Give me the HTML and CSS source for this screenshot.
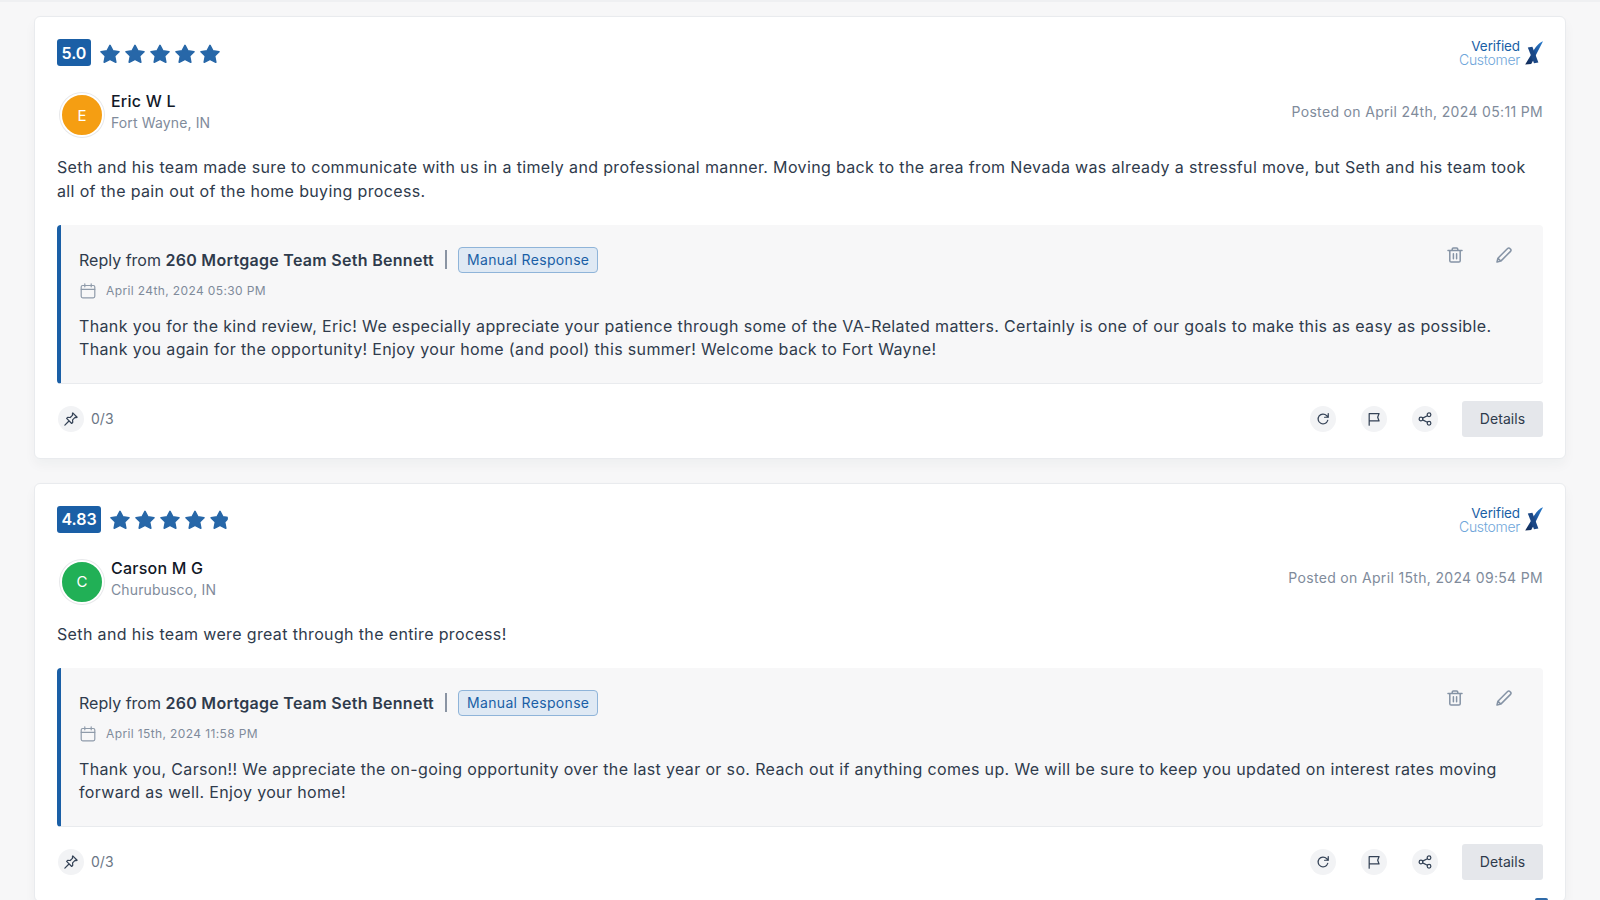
FILE: index.html
```html
<!DOCTYPE html>
<html lang="en">
<head>
<meta charset="utf-8">
<title>Reviews</title>
<link rel="stylesheet" href="styles.css">
</head>
<body>
<svg class="sprite" width="0" height="0" aria-hidden="true">
  <defs>
    <linearGradient id="xgrad" x1="1" y1="0" x2="0" y2="1">
      <stop offset="0" stop-color="#2a7fd0"/>
      <stop offset=".5" stop-color="#1a4f96"/>
      <stop offset="1" stop-color="#10264f"/>
    </linearGradient>
    <symbol id="star" viewBox="0 0 20 20"><path d="M10 1.4l2.9 5.5 6.1.8-4.4 4.3 1.2 6.2L10 15.4l-5.8 2.8 1.2-6.2L1 7.7l6.1-.8z"/></symbol>
    <symbol id="cal" viewBox="0 0 16 16"><rect x="1.2" y="2.5" width="13.6" height="12.3" rx="1.5"/><path d="M1.2 6.3h13.6M4.8 .8v3M11.2 .8v3"/></symbol>
    <symbol id="trash" viewBox="0 0 16 16"><path d="M1 3.5h14M5.2 3.5V2.2c0-.7.5-1.2 1.2-1.2h3.2c.7 0 1.2.5 1.2 1.2v1.3M2.8 3.5v10.2c0 .8.6 1.3 1.3 1.3h7.8c.7 0 1.3-.5 1.3-1.3V3.5M6.4 6.8v5M9.6 6.8v5"/></symbol>
    <symbol id="pen" viewBox="0 0 16 16"><path d="M1 15l.9-3.8L11.6 1.5c.7-.7 1.7-.7 2.3 0l.6.6c.6.6.6 1.6 0 2.3L4.8 14.1zM2 11.2l2.8 2.8"/></symbol>
    <symbol id="pin" viewBox="0 0 16 16"><path d="M10 1l5 5-1.2.5-1.2-.3-2.8 2.8.2 2.9-1.2 1.2-5.8-5.8 1.2-1.2 2.9.2 2.8-2.8-.3-1.2zM5.4 10.6L1 15"/></symbol>
    <symbol id="refresh" viewBox="0 0 16 16"><path d="M13.4 9.6A5.6 5.6 0 1 1 12.2 4.2L13.8 6M14 1.8V6H9.8"/></symbol>
    <symbol id="flag" viewBox="0 0 16 16"><path d="M2.5 15V1.8h11.3l-1.6 4.1 1.6 4.3H2.5"/></symbol>
    <symbol id="share" viewBox="0 0 16 16"><circle cx="3.4" cy="8" r="2.1"/><circle cx="12.6" cy="3.2" r="2.1"/><circle cx="12.6" cy="12.8" r="2.1"/><path d="M5.3 7l5.4-2.8M5.3 9l5.4 2.8"/></symbol>
    <symbol id="xmark" viewBox="0 0 18 24"><path fill="url(#xgrad)" d="M18 .2C13.6 1.6 10 7 7.4 11.5L.2 23.6l6-.6C9.6 17 14 8 18 .2z"/><path class="x-mid" d="M2.8 6.6l4.6-.8 6 15.6-4.4.8z"/></symbol>
  </defs>
</svg>
<main class="page">
  <article class="card">
    <div class="top-row">
      <div class="rating"><span class="score">5.0</span>
        <span class="stars">
          <svg class="star"><use href="#star"/></svg><svg class="star"><use href="#star"/></svg><svg class="star"><use href="#star"/></svg><svg class="star"><use href="#star"/></svg><svg class="star"><use href="#star"/></svg>
        </span>
      </div>
      <div class="verified"><div class="v-text"><span class="v-one">Verified</span><span class="v-two">Customer</span></div><svg class="v-x"><use href="#xmark"/></svg></div>
    </div>
    <div class="author-row">
      <div class="author"><span class="avatar orange">E</span><div class="who"><div class="name">Eric W L</div><div class="place">Fort Wayne, IN</div></div></div>
      <div class="posted">Posted on April 24th, 2024 05:11 PM</div>
    </div>
    <p class="review">Seth and his team made sure to communicate with us in a timely and professional manner. Moving back to the area from Nevada was already a stressful move, but Seth and his team took all of the pain out of the home buying process.</p>
    <section class="reply">
      <div class="reply-actions"><svg class="ic"><use href="#trash"/></svg><svg class="ic"><use href="#pen"/></svg></div>
      <div class="reply-head"><span>Reply from <b>260 Mortgage Team Seth Bennett</b></span><span class="bar"></span><span class="tag">Manual Response</span></div>
      <div class="reply-date"><svg class="cal"><use href="#cal"/></svg>April 24th, 2024 05:30 PM</div>
      <p class="reply-text">Thank you for the kind review, Eric! We especially appreciate your patience through some of the VA-Related matters. Certainly is one of our goals to make this as easy as possible. Thank you again for the opportunity! Enjoy your home (and pool) this summer! Welcome back to Fort Wayne!</p>
    </section>
    <div class="foot">
      <div class="pins"><span class="round"><svg class="ic-s"><use href="#pin"/></svg></span>0/3</div>
      <div class="tools">
        <span class="round"><svg class="ic-s"><use href="#refresh"/></svg></span>
        <span class="round"><svg class="ic-s"><use href="#flag"/></svg></span>
        <span class="round"><svg class="ic-s"><use href="#share"/></svg></span>
        <button class="details">Details</button>
      </div>
    </div>
  </article>

  <article class="card">
    <div class="top-row">
      <div class="rating"><span class="score">4.83</span>
        <span class="stars">
          <svg class="star"><use href="#star"/></svg><svg class="star"><use href="#star"/></svg><svg class="star"><use href="#star"/></svg><svg class="star"><use href="#star"/></svg><svg class="star part"><use href="#star"/></svg>
        </span>
      </div>
      <div class="verified"><div class="v-text"><span class="v-one">Verified</span><span class="v-two">Customer</span></div><svg class="v-x"><use href="#xmark"/></svg></div>
    </div>
    <div class="author-row">
      <div class="author"><span class="avatar green">C</span><div class="who"><div class="name">Carson M G</div><div class="place">Churubusco, IN</div></div></div>
      <div class="posted">Posted on April 15th, 2024 09:54 PM</div>
    </div>
    <p class="review">Seth and his team were great through the entire process!</p>
    <section class="reply">
      <div class="reply-actions"><svg class="ic"><use href="#trash"/></svg><svg class="ic"><use href="#pen"/></svg></div>
      <div class="reply-head"><span>Reply from <b>260 Mortgage Team Seth Bennett</b></span><span class="bar"></span><span class="tag">Manual Response</span></div>
      <div class="reply-date"><svg class="cal"><use href="#cal"/></svg>April 15th, 2024 11:58 PM</div>
      <p class="reply-text">Thank you, Carson!! We appreciate the on-going opportunity over the last year or so. Reach out if anything comes up. We will be sure to keep you updated on interest rates moving forward as well. Enjoy your home!</p>
    </section>
    <div class="foot">
      <div class="pins"><span class="round"><svg class="ic-s"><use href="#pin"/></svg></span>0/3</div>
      <div class="tools">
        <span class="round"><svg class="ic-s"><use href="#refresh"/></svg></span>
        <span class="round"><svg class="ic-s"><use href="#flag"/></svg></span>
        <span class="round"><svg class="ic-s"><use href="#share"/></svg></span>
        <button class="details">Details</button>
      </div>
    </div>
  </article>
</main>
<span class="widget"></span>
</body>
</html>
```
FILE: styles.css
```css
* { box-sizing: border-box; }
html, body { height: 100%; }
body {
  margin: 0;
  height: 900px;
  overflow: hidden;
  position: relative;
  background: #f7f7f8;
  color: #2f3b4c;
  font-family: Inter, "Liberation Sans", sans-serif;
  font-size: 16px;
}
.sprite { position: absolute; }
.page {
  border-top: 2px solid #eff0f2;
  padding: 14px 34px 0;
  display: flex;
  flex-direction: column;
  gap: 24px;
}
.card {
  background: #fff;
  border: 1px solid #e9ebee;
  border-radius: 6px;
  padding: 22px 22px 21px;
  box-shadow: 0 6px 12px rgba(30, 40, 60, .04);
}
.top-row, .author-row, .foot, .author, .rating, .tools, .pins, .verified, .reply-head, .reply-date { display: flex; align-items: center; }
.top-row, .author-row, .foot { justify-content: space-between; }
.top-row { height: 27px; }
.score {
  display: flex; align-items: center; justify-content: center;
  height: 27px; padding: 0 4.5px;
  background: #1a5fa6; color: #fff; border-radius: 3px;
  font-size: 16px; font-weight: 600;
}
.stars { display: flex; gap: 5px; margin-left: 9px; margin-top: 2px; }
.star { width: 20px; height: 20px; fill: #2767a8; stroke: #2767a8; stroke-width: 1.6; stroke-linejoin: round; }
.part { clip-path: inset(0 2.5px 0 0); }
.verified { gap: 5px; }
.v-text { display: flex; flex-direction: column; align-items: flex-end; line-height: 14px; margin-top: 1px; font-family: Inter, sans-serif; }
.v-one { color: #1a5fa6; font-size: 13.5px; letter-spacing: -.1px; }
.v-two { color: #6fa6da; font-size: 14px; font-weight: 300; letter-spacing: -.3px; }
.v-x { width: 18px; height: 24px; }
.x-mid { fill: #1b4886; }
.author-row { margin-top: 25px; height: 46px; }
.avatar {
  width: 44px; height: 44px; margin-left: 3px; margin-top: 2px; border-radius: 50%;
  border: 2px solid #fff; box-shadow: 0 0 0 1px #e7e8ea;
  display: flex; align-items: center; justify-content: center;
  color: #fff; font-size: 15px;
}
.orange { background: #f59e12; }
.green { background: #21b056; }
.who { margin-left: 7px; margin-top: -4px; }
.name { color: #111827; font-size: 16px; font-weight: 500; line-height: 22px; letter-spacing: .22px; }
.place { color: #808b9b; font-size: 14px; line-height: 22px; letter-spacing: .13px; }
.posted { color: #808b9b; font-size: 14px; margin-top: -6px; letter-spacing: .33px; }
.review { margin: 19px 0 0; color: #2f3b4c; font-size: 16px; line-height: 23.5px; letter-spacing: .355px; }
.reply {
  position: relative;
  margin-top: 21.5px;
  padding: 22px 22px 21px 18px;
  background: #f7f7f8;
  border-left: 4px solid #1a5fa6;
  border-bottom: 1px solid #e9ebee;
  border-radius: 4px;
}
.reply-actions { position: absolute; top: 22px; right: 31px; display: flex; gap: 33px; }
.ic { width: 16px; height: 16px; fill: none; stroke: #8593a5; stroke-width: 1.5; stroke-linecap: round; stroke-linejoin: round; }
.reply-head { height: 26px; color: #2f3b4c; }
.reply-head b { font-weight: 600; letter-spacing: .29px; }
.bar { width: 2px; height: 19px; margin: 0 11px; background: #8a94a3; }
.tag {
  height: 26px; padding: 0 8px; display: flex; align-items: center;
  background: #dfe9f4; border: 1px solid #8fb4d9; border-radius: 4px;
  color: #1a5fa6; font-size: 14px; letter-spacing: .33px;
}
.reply-date { margin-top: 9px; height: 18px; color: #808b9b; font-size: 12px; letter-spacing: .38px; gap: 10px; padding-left: 1px; }
.cal { width: 16px; height: 16px; fill: none; stroke: #8f9baa; stroke-width: 1.2; stroke-linecap: round; }
.reply-text { margin: 15px 0 0; font-size: 16px; line-height: 23.5px; color: #2f3b4c; letter-spacing: .355px; }
.foot { margin-top: 17px; height: 36px; }
.pins { color: #6b7685; font-size: 14px; gap: 7px; padding-left: 1px; }
.round {
  width: 26px; height: 26px; border-radius: 50%; background: #f2f3f5;
  display: flex; align-items: center; justify-content: center;
}
.ic-s { width: 14px; height: 14px; fill: none; stroke: #344256; stroke-width: 1.4; stroke-linecap: round; stroke-linejoin: round; }
.tools { gap: 25px; }
.details {
  width: 81px; height: 36px; margin-left: -1px; border: 0; border-radius: 3px;
  background: #e5e7eb; color: #2f3b4c;
  font: 400 14px Inter, "Liberation Sans", sans-serif;
  letter-spacing: .05px;
}
.widget {
  position: absolute; right: 52px; bottom: 0;
  width: 13px; height: 2px; background: #2f6aa8; border-radius: 6px 6px 0 0;
}
```
